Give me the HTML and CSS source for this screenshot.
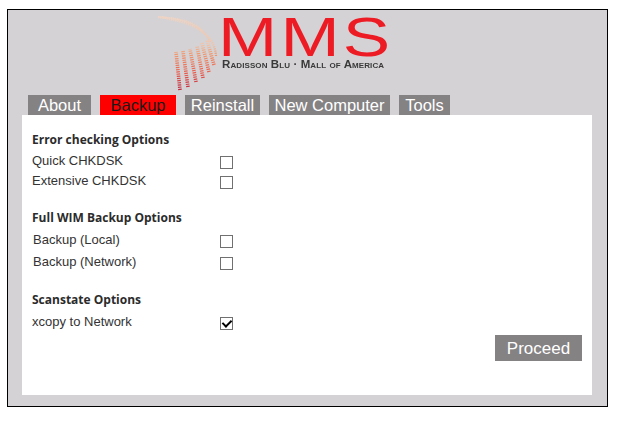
FILE: index.html
```html
<!DOCTYPE html>
<html lang="en">
<head>
    <meta charset="UTF-8">
    <title>MMS</title>
    <link rel="stylesheet" href="styles.css">
</head>
<body>
    <div class="window">
        <div class="logo-row">
            <svg class="swoosh" viewBox="0 0 67 85" width="67" height="85">
                <defs>
                    <linearGradient id="fade" gradientUnits="userSpaceOnUse" x1="0" y1="5" x2="0" y2="82">
                        <stop offset="0" stop-color="#efd5c5"/>
                        <stop offset="0.38" stop-color="#efc4aa"/>
                        <stop offset="0.5" stop-color="#f09a70"/>
                        <stop offset="0.75" stop-color="#ea5a4a"/>
                        <stop offset="1" stop-color="#b81f3c"/>
                    </linearGradient>
                </defs>
                <g fill="none" stroke="url(#fade)" stroke-width="3.600" stroke-dasharray="1.200 1">
                    <path d="M25 80 L21 42"/>
                    <path d="M33 77 L28 41"/>
                    <path d="M41 72 L35 39"/>
                    <path d="M48 68 L42 36"/>
                    <path d="M54 62 L47 33"/>
                    <path d="M59 55 L52 30"/>
                    <path d="M61 46 C60 32 52 14 3 7" stroke-width="2.200"/>
                    <path d="M55 32 C50 20 38 10 3 7" stroke-width="2.200"/>
                    <path d="M48 22 C42 14 30 8 3 7" stroke-width="1.800"/>
                </g>
            </svg>
            <div class="brand">
                <div class="brand-name">MMS</div>
                <div class="brand-sub">Radisson Blu · Mall of America</div>
            </div>
        </div>

        <div class="tabs">
            <a class="tab tab-about">About</a>
            <a class="tab tab-backup active">Backup</a>
            <a class="tab tab-reinstall">Reinstall</a>
            <a class="tab tab-computer">New Computer</a>
            <a class="tab tab-tools">Tools</a>
        </div>

        <div class="panel">
            <section class="group group-check">
                <h4>Error checking Options</h4>
                <label class="option"><span>Quick CHKDSK</span><input type="checkbox"></label>
                <label class="option"><span>Extensive CHKDSK</span><input type="checkbox"></label>
            </section>

            <section class="group group-wim">
                <h4>Full WIM Backup Options</h4>
                <label class="option"><span>Backup (Local)</span><input type="checkbox"></label>
                <label class="option"><span>Backup (Network)</span><input type="checkbox"></label>
            </section>

            <section class="group group-scan">
                <h4>Scanstate Options</h4>
                <label class="option"><span>xcopy to Network</span><input type="checkbox" checked></label>
            </section>

            <div class="actions">
                <button type="button" class="btn">Proceed</button>
            </div>
        </div>
    </div>
</body>
</html>
```

FILE: styles.css
```css
* { margin: 0; padding: 0; box-sizing: border-box; }

body {
    background-color: #FFFFFF;
    padding: 9px 0 0 7px;
    font-family: "Liberation Sans", Arial, sans-serif;
    color: #333333;
}

.window {
    width: 601px;
    height: 398px;
    background-color: #D4D2D5;
    border: 1px solid #000000;
    padding: 0 15px 0 14px;
}

/* logo */
.logo-row {
    display: flex;
    height: 85px;
    padding-left: 133px;
}
.swoosh { filter: blur(0.5px); }
.brand { filter: blur(0.4px); }
.brand-name {
    font-size: 56px;
    line-height: 48px;
    height: 47px;
    margin: 3px 0 0 -4px;
    letter-spacing: 2.500px;
    color: #ED1C24;
    transform: scaleX(1.27);
    transform-origin: left top;
}
.brand-sub {
    font-size: 11.500px;
    font-weight: 700;
    font-variant: small-caps;
    line-height: 9px;
    white-space: nowrap;
    color: #3A3A3A;
    letter-spacing: 0.1px;
}

/* tabs */
.tabs {
    display: flex;
    gap: 9px;
    height: 20px;
    padding-left: 6px;
}
.tab {
    height: 20px;
    line-height: 21px;
    font-size: 16.500px;
    text-align: center;
    background-color: #858284;
    color: #FFFFFF;
}
.tab.active { background-color: #FF0000; color: #1A1A1A; }
.tab-about { width: 63px; }
.tab-backup { width: 76px; }
.tab-reinstall { width: 75px; }
.tab-computer { width: 121px; }
.tab-tools { width: 51px; }

/* panel */
.panel {
    height: 280px;
    background-color: #FFFFFF;
    padding: 16px 10px 0 10px;
}
.group h4 {
    font-family: "Open Sans", sans-serif;
    font-size: 12px;
    font-weight: 700;
    line-height: 17px;
    color: #2B2B2B;
}
.option {
    display: flex;
    font-size: 13px;
    line-height: 16px;
    height: 20px;
}
.option span { width: 188px; padding-top: 1px; }
.option input {
    appearance: none;
    position: relative;
    width: 13px;
    height: 13px;
    margin-top: 4px;
    border: 1px solid #707070;
    background-color: #FFFFFF;
}
.option input:checked::after {
    content: "";
    position: absolute;
    left: 3px;
    top: 0;
    width: 4px;
    height: 7px;
    border: solid #000000;
    border-width: 0 2px 2px 0;
    transform: rotate(45deg);
}

.group-check .option:first-of-type { margin-top: 4px; }
.group-wim { margin-top: 17px; }
.group-wim .option { height: 22px; }
.group-wim .option:first-of-type { margin-top: 5px; }
.group-wim .option span { padding-left: 1px; }
.group-scan { margin-top: 16px; }
.group-scan .option:first-of-type { margin-top: 5px; }

.actions {
    display: flex;
    justify-content: flex-end;
}
.btn {
    width: 87px;
    height: 26px;
    margin-top: 2px;
    padding-top: 2px;
    border: none;
    background-color: #858284;
    color: #FFFFFF;
    font-family: "Liberation Sans", Arial, sans-serif;
    font-size: 17px;
}
```
